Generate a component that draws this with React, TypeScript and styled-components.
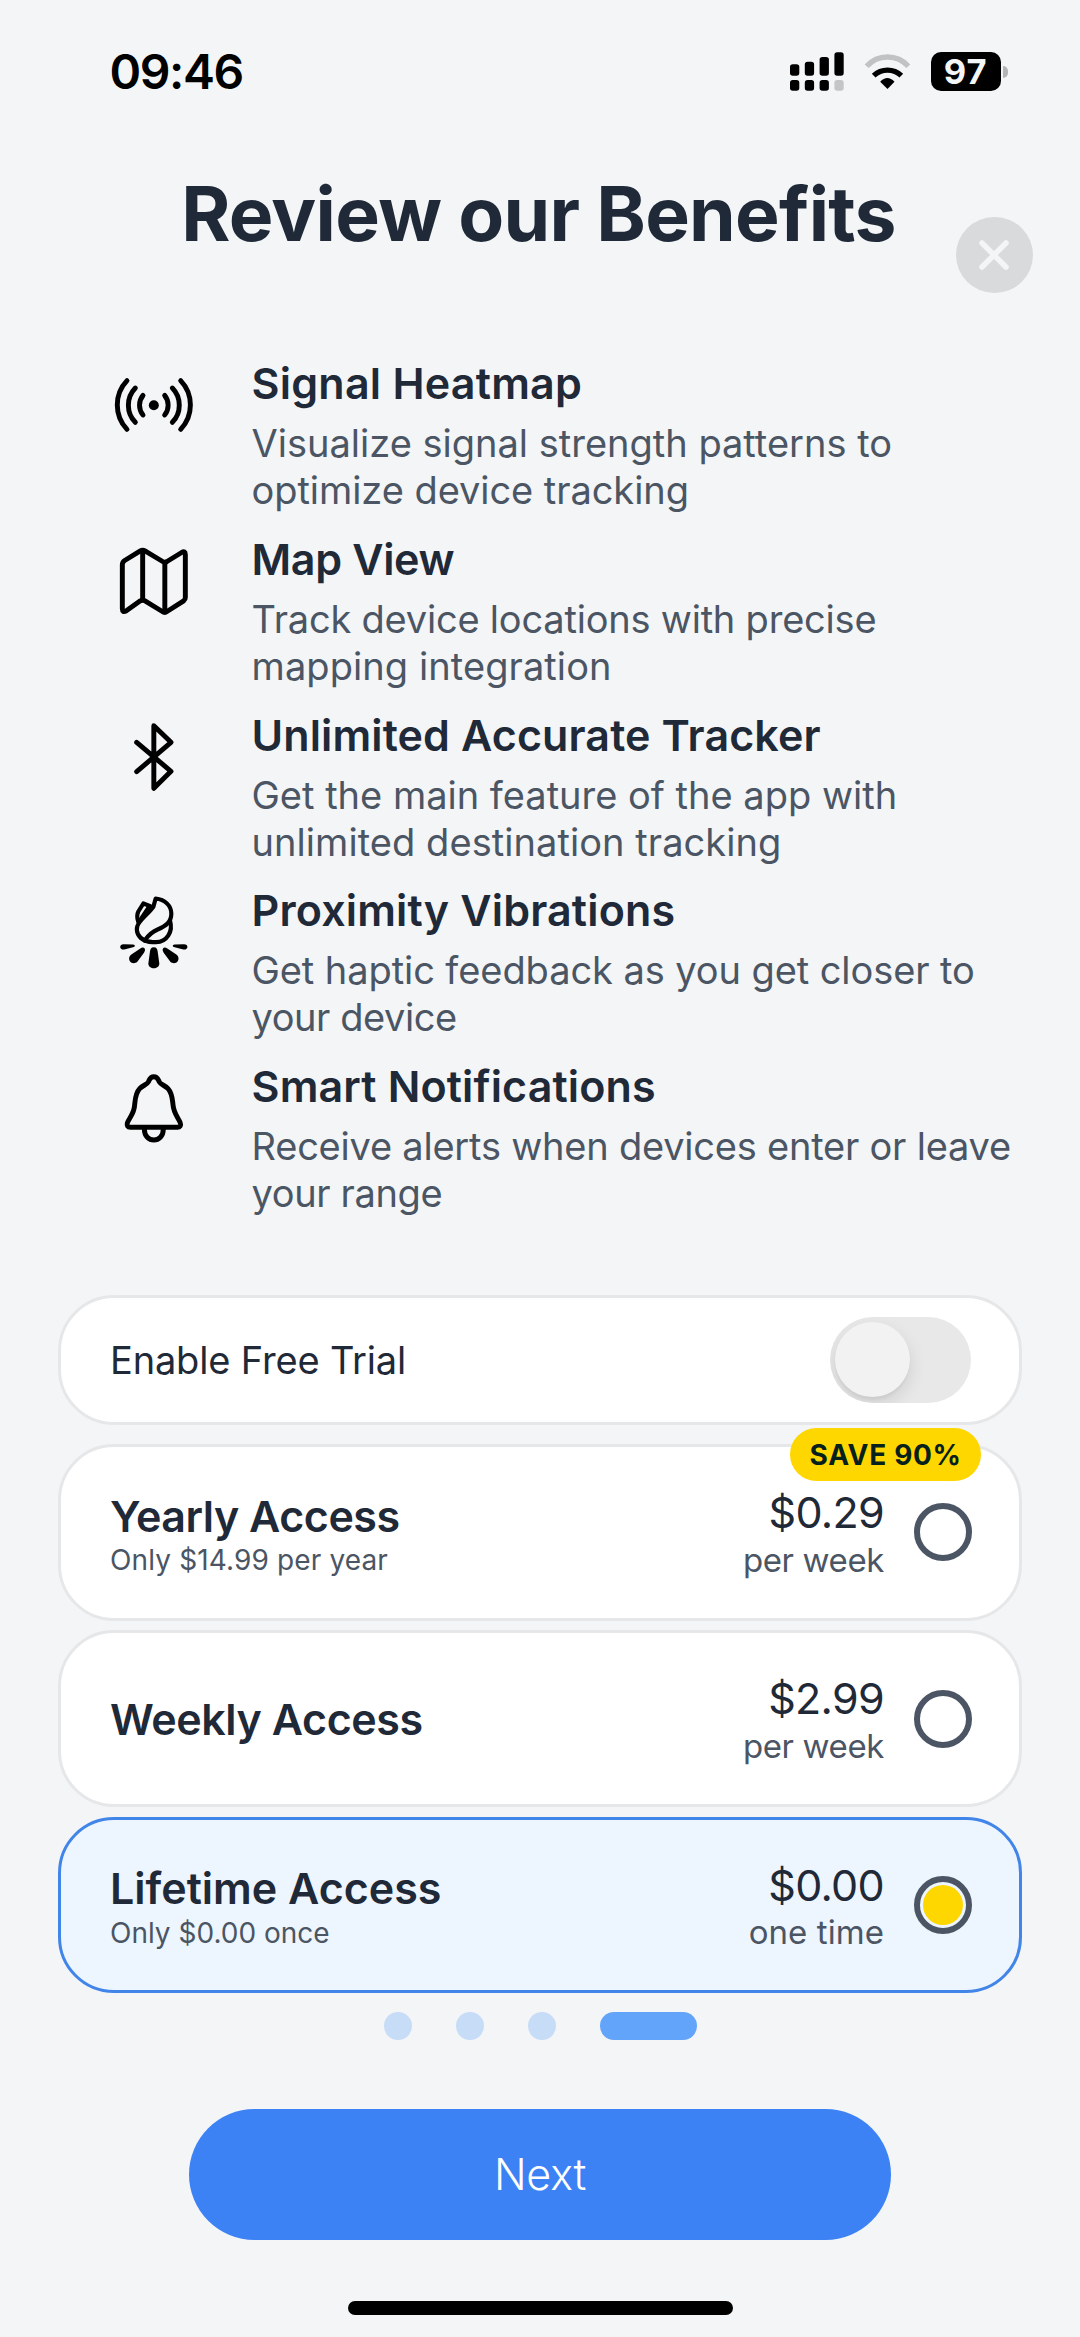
import React, { useState } from 'react';
import styled, { createGlobalStyle } from 'styled-components';

const GlobalStyle = createGlobalStyle`
  * { box-sizing: border-box; }
  body { margin: 0; background: #f3f5f7; }
`;

const Screen = styled.main`
  width: 1080px;
  height: 2337px;
  display: flex;
  flex-direction: column;
  overflow: hidden;
  background: #f3f5f7;
  color: #1f2937;
  font-family: Inter, "Liberation Sans", sans-serif;
`;

const StatusBar = styled.div`
  height: 143px;
  padding: 0 72.5px 0 109.5px;
  display: flex;
  align-items: center;
  justify-content: space-between;
  color: #000;
`;

const Clock = styled.span`
  font-size: 48px;
  line-height: 49px;
  font-weight: 600;
  letter-spacing: -1.43px;
`;

const StatusIcons = styled.div`
  display: flex;
  align-items: center;
`;

const Battery = styled.div`
  margin-left: 20px;
  display: flex;
  align-items: center;
  gap: 2.5px;
`;

const BatteryBody = styled.span`
  width: 69.5px;
  height: 39px;
  border-radius: 10px;
  background: #000;
  color: #f3f5f7;
  display: flex;
  align-items: center;
  justify-content: center;
  font-size: 34.5px;
  line-height: 39px;
  font-weight: 700;
  letter-spacing: 1.2px;
`;

const BatteryNub = styled.span`
  width: 4.5px;
  height: 12px;
  border-radius: 0 5px 5px 0;
  background: #b3b4b6;
`;

const Header = styled.header`
  position: relative;
  padding-top: 26px;
  padding-right: 3px;
`;

const Title = styled.h1`
  margin: 0;
  text-align: center;
  font-size: 75px;
  line-height: 90px;
  font-weight: 700;
  letter-spacing: -0.73px;
`;

const CloseButton = styled.button`
  position: absolute;
  top: 73.5px;
  right: 47.5px;
  width: 76.5px;
  height: 76.5px;
  padding: 0;
  border: 0;
  border-radius: 50%;
  background: #d9dadc;
  display: grid;
  place-items: center;
`;

const Features = styled.ul`
  list-style: none;
  margin: 97px 0 0;
  padding: 0 0 0 114.33px;
  display: grid;
  grid-auto-rows: 175.8px;
`;

const Feature = styled.li`
  display: grid;
  grid-template-columns: 80px 1fr;
  column-gap: 57.2px;
`;

const FeatureIcon = styled.svg`
  width: 80px;
  height: 80px;
  margin-top: 9px;
  fill: none;
  stroke: #000;
  stroke-width: 14.8;
  stroke-linecap: round;
  stroke-linejoin: round;
`;

const FeatureTitle = styled.h2<{ $track: number }>`
  margin: 0 0 10px;
  font-size: 43px;
  line-height: 54px;
  font-weight: 600;
  letter-spacing: ${(p) => p.$track}px;
  white-space: nowrap;
`;

const FeatureLine = styled.span<{ $track: number }>`
  display: block;
  color: #4b5563;
  font-size: 38px;
  line-height: 46.9px;
  letter-spacing: ${(p) => p.$track}px;
  white-space: nowrap;
`;

const Options = styled.section`
  margin: 60px 58px 0;
  display: flex;
  flex-direction: column;
`;

const Card = styled.div<{ $selected?: boolean }>`
  position: relative;
  border: 3px solid ${(p) => (p.$selected ? '#4285e8' : '#e6e7e9')};
  border-radius: 56px;
  background: ${(p) => (p.$selected ? '#edf5ff' : '#fff')};
  padding: 0 47px 0 49px;
  display: flex;
  align-items: center;
  justify-content: space-between;
`;

const TrialCard = styled(Card)`
  height: 129.7px;
  margin-bottom: 19.6px;
`;

const TrialLabel = styled.span`
  font-size: 38px;
  line-height: 46px;
  letter-spacing: -0.17px;
`;

const Toggle = styled.button`
  width: 141px;
  height: 86px;
  margin-right: 1px;
  padding: 0 5px;
  border: 0;
  border-radius: 43px;
  background: #e8e8e8;
  display: flex;
  align-items: center;
  overflow: hidden;
`;

const Knob = styled.span`
  width: 75px;
  height: 75px;
  border-radius: 50%;
  background: #f2f2f2;
  box-shadow: 0 7px 18px rgba(0, 0, 0, 0.11), 0 3px 3px rgba(0, 0, 0, 0.04);
`;

const PlanList = styled.div`
  display: flex;
  flex-direction: column;
  gap: 9.8px;
`;

const PlanCard = styled(Card)`
  height: 176.4px;
`;

const PlanInfo = styled.div<{ $hasNote: boolean }>`
  flex: 1;
  display: flex;
  flex-direction: column;
  gap: 2.4px;
  padding-top: ${(p) => (p.$hasNote ? 3 : 0)}px;
`;

const PlanName = styled.strong<{ $track: number }>`
  font-size: 43px;
  line-height: 50px;
  font-weight: 600;
  letter-spacing: ${(p) => p.$track}px;
`;

const PlanNote = styled.span<{ $track: number }>`
  color: #4b5563;
  font-size: 28px;
  line-height: 34px;
  letter-spacing: ${(p) => p.$track}px;
`;

const PriceBlock = styled.div`
  display: flex;
  flex-direction: column;
  align-items: flex-end;
  gap: 2.6px;
  padding-top: 2px;
  margin-right: 30px;
`;

const Price = styled.span`
  font-size: 43px;
  line-height: 50px;
  letter-spacing: -0.68px;
`;

const Period = styled.span<{ $track: number }>`
  color: #4b5563;
  font-size: 33px;
  line-height: 40px;
  letter-spacing: ${(p) => p.$track}px;
`;

const Radio = styled.span`
  width: 58px;
  height: 58px;
  border: 6px solid #4b5563;
  border-radius: 50%;
  display: grid;
  place-items: center;
`;

const RadioFill = styled.span`
  width: 40px;
  height: 40px;
  border-radius: 50%;
  background: #ffd700;
`;

const Badge = styled.span`
  position: absolute;
  top: -19px;
  right: 38px;
  width: 190.7px;
  height: 52.7px;
  border-radius: 27px;
  background: #ffd700;
  color: #06211c;
  display: flex;
  align-items: center;
  justify-content: center;
  font-size: 28px;
  font-weight: 700;
  letter-spacing: 0.69px;
`;

const Pager = styled.div`
  margin-top: 19px;
  display: flex;
  justify-content: center;
  gap: 44px;
`;

const Dot = styled.span<{ $active?: boolean }>`
  width: ${(p) => (p.$active ? 97 : 28)}px;
  height: 28px;
  border-radius: 14px;
  background: ${(p) => (p.$active ? '#61a4f9' : '#c6dcf7')};
`;

const NextButton = styled.button`
  align-self: center;
  width: 702.5px;
  height: 130.7px;
  margin-top: 69px;
  padding: 0 0 1px;
  border: 0;
  border-radius: 66px;
  background: #3c82f5;
  color: #fff;
  font-family: inherit;
  font-size: 43px;
  font-weight: 300;
  letter-spacing: -0.2px;
`;

const HomeIndicator = styled.span`
  align-self: center;
  width: 385px;
  height: 14px;
  margin-top: 61.3px;
  border-radius: 7px;
  background: #000;
`;

const CellularIcon = () => (
  <svg width="54" height="39" viewBox="0 0 54 39">
    <rect x="0" y="12.2" width="9.3" height="11.6" rx="2.8" />
    <rect x="14.8" y="9.7" width="9.3" height="14.1" rx="2.8" />
    <rect x="29.6" y="5" width="9.3" height="18.8" rx="2.8" />
    <rect x="44.4" y="0.3" width="9.3" height="23.5" rx="2.8" />
    <rect x="0" y="28.1" width="9.3" height="10.7" rx="2.8" />
    <rect x="14.8" y="28.1" width="9.3" height="10.7" rx="2.8" />
    <rect x="29.6" y="28.1" width="9.3" height="10.7" rx="2.8" />
    <rect x="44.4" y="28.1" width="9.3" height="10.7" rx="2.8" fill="#c4c5c7" />
  </svg>
);

const WifiSvg = styled.svg`
  width: 47px;
  height: 39px;
  margin-left: 20.5px;
  fill: none;
  stroke-width: 16;
`;

const WifiIcon = () => (
  <WifiSvg viewBox="252 36 141 117">
    <path d="M260 79A84 84 0 0 1 385 79" stroke="#c1c2c4" />
    <path d="M281 107A60 60 0 0 1 364 107" stroke="#000" />
    <path d="M300.500 125.500Q322 103 343.500 125.500L322.500 147Z" fill="#000" stroke="none" />
  </WifiSvg>
);

const SignalIcon = () => (
  <FeatureIcon viewBox="73 75 240 240">
    <path d="M160 166A47 47 0 0 0 160 225" />
    <path d="M137 144A74 74 0 0 0 137 247" />
    <path d="M112 122A106 106 0 0 0 112 268" />
    <path d="M225 166A47 47 0 0 1 225 225" />
    <path d="M248 144A74 74 0 0 1 248 247" />
    <path d="M273 122A106 106 0 0 1 273 268" />
    <circle cx="192.500" cy="195.500" r="15" fill="#000" stroke="none" />
  </FeatureIcon>
);

const MapIcon = () => (
  <FeatureIcon viewBox="73 602.5 240 240">
    <path d="M98 674Q98 666 105 661L152 632Q159 628 166 632L219 664Q225 668 232 664L276 637Q287 631 287 643L287 772Q287 778 282 782L232 814Q225 819 218 814L166 782Q159 778 152 782L110 812Q98 819 98 806Z" />
    <path d="M159 631V779M225.500 667V816" />
  </FeatureIcon>
);

const BluetoothIcon = () => (
  <FeatureIcon viewBox="73 80 240 240">
    <path d="M141 156L244 243L192.500 294V106L244 156L141 244" />
  </FeatureIcon>
);

const Rays = () => (
  <>
    <path d="M94 177C95 168 87 166 80 171L53 189C36 202 55 225 71 211L91 184Z" />
    <path d="M58 167L32 174C17 176 15 158 30 158L58 159C66 160 65 166 58 167Z" />
  </>
);

const VibrationIcon = () => (
  <FeatureIcon viewBox="1 1.5 240 240">
    <g strokeWidth="12.500">
      <path d="M119 46L126 21C155 24 173 44 173 66C173 92 156 104 132 114C112 122 102 134 93 147C74 138 66 120 71 104C78 84 104 68 119 46Z" />
      <path d="M169 87C179 120 160 151 127 152C112 152 102 151 93 147" />
      <path d="M110 44L89 36L74 60C69 70 69 78 74 92" />
      <path d="M106 46L82 82" />
    </g>
    <g fill="#000" stroke="none">
      <path d="M120.500 167C112 167 110 172 109 180L104 216C104 235 137 235 137 216L132 180C131 172 129 167 120.500 167Z" />
      <Rays />
      <g transform="translate(241 0) scale(-1 1)">
        <Rays />
      </g>
    </g>
  </FeatureIcon>
);

const BellIcon = () => (
  <FeatureIcon viewBox="73 595 240 240">
    <path d="M192.500 621C181 621 180 629 176 637C172 645 160 646 150 657C137 671 137 688 135 705C134 733 118 745 113 760C111 768 114 773 122 773H263C271 773 275 768 272 760C267 745 252 733 250 705C248 688 248 671 235 657C225 646 213 645 209 637C205 629 204 621 192.500 621Z" />
    <path d="M164 777C164 800 178 811 192.500 811C207 811 221 800 221 777" />
  </FeatureIcon>
);

type Line = [text: string, track: number];

const features: { icon: React.ReactNode; title: Line; lines: Line[] }[] = [
  {
    icon: <SignalIcon />,
    title: ['Signal Heatmap', 0.24],
    lines: [['Visualize signal strength patterns to', 0], ['optimize device tracking', -0.06]],
  },
  {
    icon: <MapIcon />,
    title: ['Map View', -0.33],
    lines: [['Track device locations with precise', -0.21], ['mapping integration', 0.08]],
  },
  {
    icon: <BluetoothIcon />,
    title: ['Unlimited Accurate Tracker', 0.12],
    lines: [['Get the main feature of the app with', 0], ['unlimited destination tracking', 0.06]],
  },
  {
    icon: <VibrationIcon />,
    title: ['Proximity Vibrations', 0.17],
    lines: [['Get haptic feedback as you get closer to', -0.08], ['your device', -0.43]],
  },
  {
    icon: <BellIcon />,
    title: ['Smart Notifications', 0.15],
    lines: [['Receive alerts when devices enter or leave', -0.22], ['your range', -0.36]],
  },
];

const plans: { name: Line; note?: Line; price: string; period: Line; badge?: string }[] = [
  { name: ['Yearly Access', -0.48], note: ['Only $14.99 per year', 0.13], price: '$0.29', period: ['per week', -0.38], badge: 'SAVE 90%' },
  { name: ['Weekly Access', -0.42], price: '$2.99', period: ['per week', -0.38] },
  { name: ['Lifetime Access', 0], note: ['Only $0.00 once', 0], price: '$0.00', period: ['one time', 0.07] },
];

export default function App() {
  const [selected, setSelected] = useState(2);
  return (
    <Screen>
      <GlobalStyle />
      <StatusBar>
        <Clock>09:46</Clock>
        <StatusIcons>
          <CellularIcon />
          <WifiIcon />
          <Battery>
            <BatteryBody>97</BatteryBody>
            <BatteryNub />
          </Battery>
        </StatusIcons>
      </StatusBar>

      <Header>
        <Title>Review our Benefits</Title>
        <CloseButton aria-label="Close">
          <svg width="32" height="32" viewBox="0 0 32 32" stroke="#f3f5f7" strokeWidth="5.5" strokeLinecap="round">
            <path d="M4 4L28 28M28 4L4 28" />
          </svg>
        </CloseButton>
      </Header>

      <Features>
        {features.map((f) => (
          <Feature key={f.title[0]}>
            {f.icon}
            <div>
              <FeatureTitle $track={f.title[1]}>{f.title[0]}</FeatureTitle>
              {f.lines.map(([text, track]) => (
                <FeatureLine key={text} $track={track}>{text}</FeatureLine>
              ))}
            </div>
          </Feature>
        ))}
      </Features>

      <Options>
        <TrialCard>
          <TrialLabel>Enable Free Trial</TrialLabel>
          <Toggle role="switch" aria-checked="false">
            <Knob />
          </Toggle>
        </TrialCard>
        <PlanList>
          {plans.map((p, i) => (
            <PlanCard key={p.name[0]} $selected={i === selected} onClick={() => setSelected(i)}>
              <PlanInfo $hasNote={!!p.note}>
                <PlanName $track={p.name[1]}>{p.name[0]}</PlanName>
                {p.note && <PlanNote $track={p.note[1]}>{p.note[0]}</PlanNote>}
              </PlanInfo>
              <PriceBlock>
                <Price>{p.price}</Price>
                <Period $track={p.period[1]}>{p.period[0]}</Period>
              </PriceBlock>
              <Radio>{i === selected && <RadioFill />}</Radio>
              {p.badge && <Badge>{p.badge}</Badge>}
            </PlanCard>
          ))}
        </PlanList>
      </Options>

      <Pager>
        <Dot />
        <Dot />
        <Dot />
        <Dot $active />
      </Pager>
      <NextButton>Next</NextButton>
      <HomeIndicator />
    </Screen>
  );
}
